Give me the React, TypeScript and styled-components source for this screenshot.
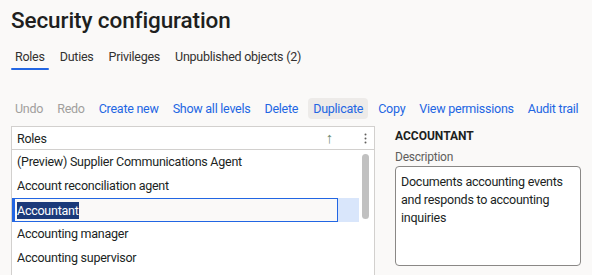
import React from "react";
import styled, { createGlobalStyle } from "styled-components";

const GlobalStyle = createGlobalStyle`
  html, body {
    margin: 0;
    padding: 0;
    background: #faf9f8;
    font-family: Roboto, "Noto Sans", sans-serif;
    color: #201f1e;
  }
  * { box-sizing: border-box; }
`;

const tabs = ["Roles", "Duties", "Privileges", "Unpublished objects (2)"];
const actions = [
  { label: "Undo", disabled: true },
  { label: "Redo", disabled: true },
  { label: "Create new" },
  { label: "Show all levels" },
  { label: "Delete" },
  { label: "Duplicate", hover: true },
  { label: "Copy" },
  { label: "View permissions" },
  { label: "Audit trail" },
];
const roles = [
  "(Preview) Supplier Communications Agent",
  "Account reconciliation agent",
  "Accountant",
  "Accounting manager",
  "Accounting supervisor",
];

export default function App() {
  return (
    <>
      <GlobalStyle />
      <Page>
        <Title>Security configuration</Title>
        <Tabs>
          {tabs.map((t, i) => (
            <Tab key={t} $active={i === 0}>
              {t}
            </Tab>
          ))}
        </Tabs>
        <Toolbar>
          {actions.map((a) => (
            <Action key={a.label} $disabled={a.disabled} $hover={a.hover}>
              {a.label}
            </Action>
          ))}
        </Toolbar>
        <Main>
          <GridPanel>
            <GridHeader>
              <HeaderLabel>Roles</HeaderLabel>
              <SortArrow>↑</SortArrow>
              <Kebab>
                <svg width="3" height="11" viewBox="0 0 3 11">
                  <circle cx="1.5" cy="1.5" r="1" fill="#605e5c" />
                  <circle cx="1.5" cy="5.5" r="1" fill="#605e5c" />
                  <circle cx="1.5" cy="9.5" r="1" fill="#605e5c" />
                </svg>
              </Kebab>
            </GridHeader>
            <GridBody>
              <Rows>
                {roles.map((r, i) =>
                  i === 2 ? (
                    <SelectedRow key={r}>
                      <EditBox>
                        <Highlight>{r}</Highlight>
                      </EditBox>
                    </SelectedRow>
                  ) : (
                    <Row key={r}>{r}</Row>
                  )
                )}
              </Rows>
              <ScrollTrack>
                <Thumb />
              </ScrollTrack>
            </GridBody>
          </GridPanel>
          <Details>
            <DetailTitle>ACCOUNTANT</DetailTitle>
            <FieldLabel>Description</FieldLabel>
            <TextBox>Documents accounting events and responds to accounting inquiries</TextBox>
          </Details>
        </Main>
      </Page>
    </>
  );
}

const Page = styled.div`
  width: 592px;
  height: 275px;
  overflow: hidden;
  padding: 0 11px;
  font-size: 12.5px;
  letter-spacing: -0.25px;
`;

const Title = styled.h1`
  margin: 0;
  padding-top: 4px;
  height: 40px;
  font-size: 22.5px;
  font-weight: 500;
  letter-spacing: -0.1px;
  line-height: 32px;
  color: #201f1e;
`;

const Tabs = styled.div`
  display: flex;
  height: 30px;
  margin-top: 4px;
`;

const Tab = styled.div<{ $active?: boolean }>`
  position: relative;
  padding: 0 4px;
  margin-right: 7px;
  line-height: 26px;
  white-space: nowrap;
  color: #323130;
  &::after {
    content: "";
    display: ${({ $active }) => ($active ? "block" : "none")};
    position: absolute;
    left: 0;
    right: 0;
    bottom: 4px;
    height: 2px;
    border-radius: 1px;
    background: #2266e3;
  }
`;

const Toolbar = styled.div`
  display: flex;
  align-items: center;
  margin-top: 24px;
  height: 20px;
  gap: 6px;
`;

const Action = styled.div<{ $disabled?: boolean; $hover?: boolean }>`
  padding: 0 ${({ $hover }) => ($hover ? "5px" : "4px")};
  height: 21px;
  line-height: 21px;
  white-space: nowrap;
  border-radius: 4px;
  color: ${({ $disabled }) => ($disabled ? "#a19f9d" : "#2266e3")};
  background: ${({ $hover }) => ($hover ? "#edebe9" : "transparent")};
`;

const Main = styled.div`
  display: flex;
  gap: 20px;
  margin-top: 8px;
`;

const GridPanel = styled.div`
  width: 366px;
  height: 160px;
  background: #ffffff;
  border: 1px solid #d2d0ce;
  border-bottom: none;
`;

const GridHeader = styled.div`
  display: flex;
  align-items: center;
  height: 23px;
  border-bottom: 1px solid #d2d0ce;
  padding-left: 5px;
`;

const HeaderLabel = styled.div`
  flex: 1;
  color: #201f1e;
`;

const SortArrow = styled.div`
  font-size: 15px;
  font-weight: 300;
  color: #6f8c76;
  margin-right: 27px;
`;

const Kebab = styled.div`
  display: flex;
  align-items: center;
  width: 14px;
  padding-left: 4px;
`;

const GridBody = styled.div`
  display: flex;
`;

const Rows = styled.div`
  flex: 1;
  max-width: 349px;
`;

const Row = styled.div`
  height: 24px;
  line-height: 24px;
  padding-left: 5px;
  color: #201f1e;
  white-space: nowrap;
`;

const SelectedRow = styled.div`
  height: 24px;
  background: #d9e6fb;
  border-left: 2px solid #2266e3;
  padding-right: 21px;
`;

const EditBox = styled.div`
  height: 24px;
  background: #faf9f8;
  border: 1.5px solid #2266e3;
  padding-left: 2px;
  display: flex;
  align-items: center;
`;

const Highlight = styled.span`
  line-height: 17px;
  background: #1b3a7a;
  color: #ffffff;
`;

const ScrollTrack = styled.div`
  width: 15px;
  padding: 4px 0 0 3px;
`;

const Thumb = styled.div`
  width: 7px;
  height: 65px;
  border-radius: 4px;
  background: #c1c1c1;
`;

const Details = styled.div`
  width: 187px;
  padding-top: 2px;
`;

const DetailTitle = styled.div`
  font-size: 12px;
  font-weight: 700;
  line-height: 16px;
  letter-spacing: 0;
  color: #201f1e;
`;

const FieldLabel = styled.div`
  margin-top: 5px;
  font-size: 12px;
  line-height: 16px;
  color: #605e5c;
`;

const TextBox = styled.div`
  margin-top: 1px;
  height: 100px;
  border: 1px solid #8a8886;
  border-radius: 4px;
  background: #ffffff;
  padding: 6px 5px;
  line-height: 18px;
  color: #201f1e;
`;
